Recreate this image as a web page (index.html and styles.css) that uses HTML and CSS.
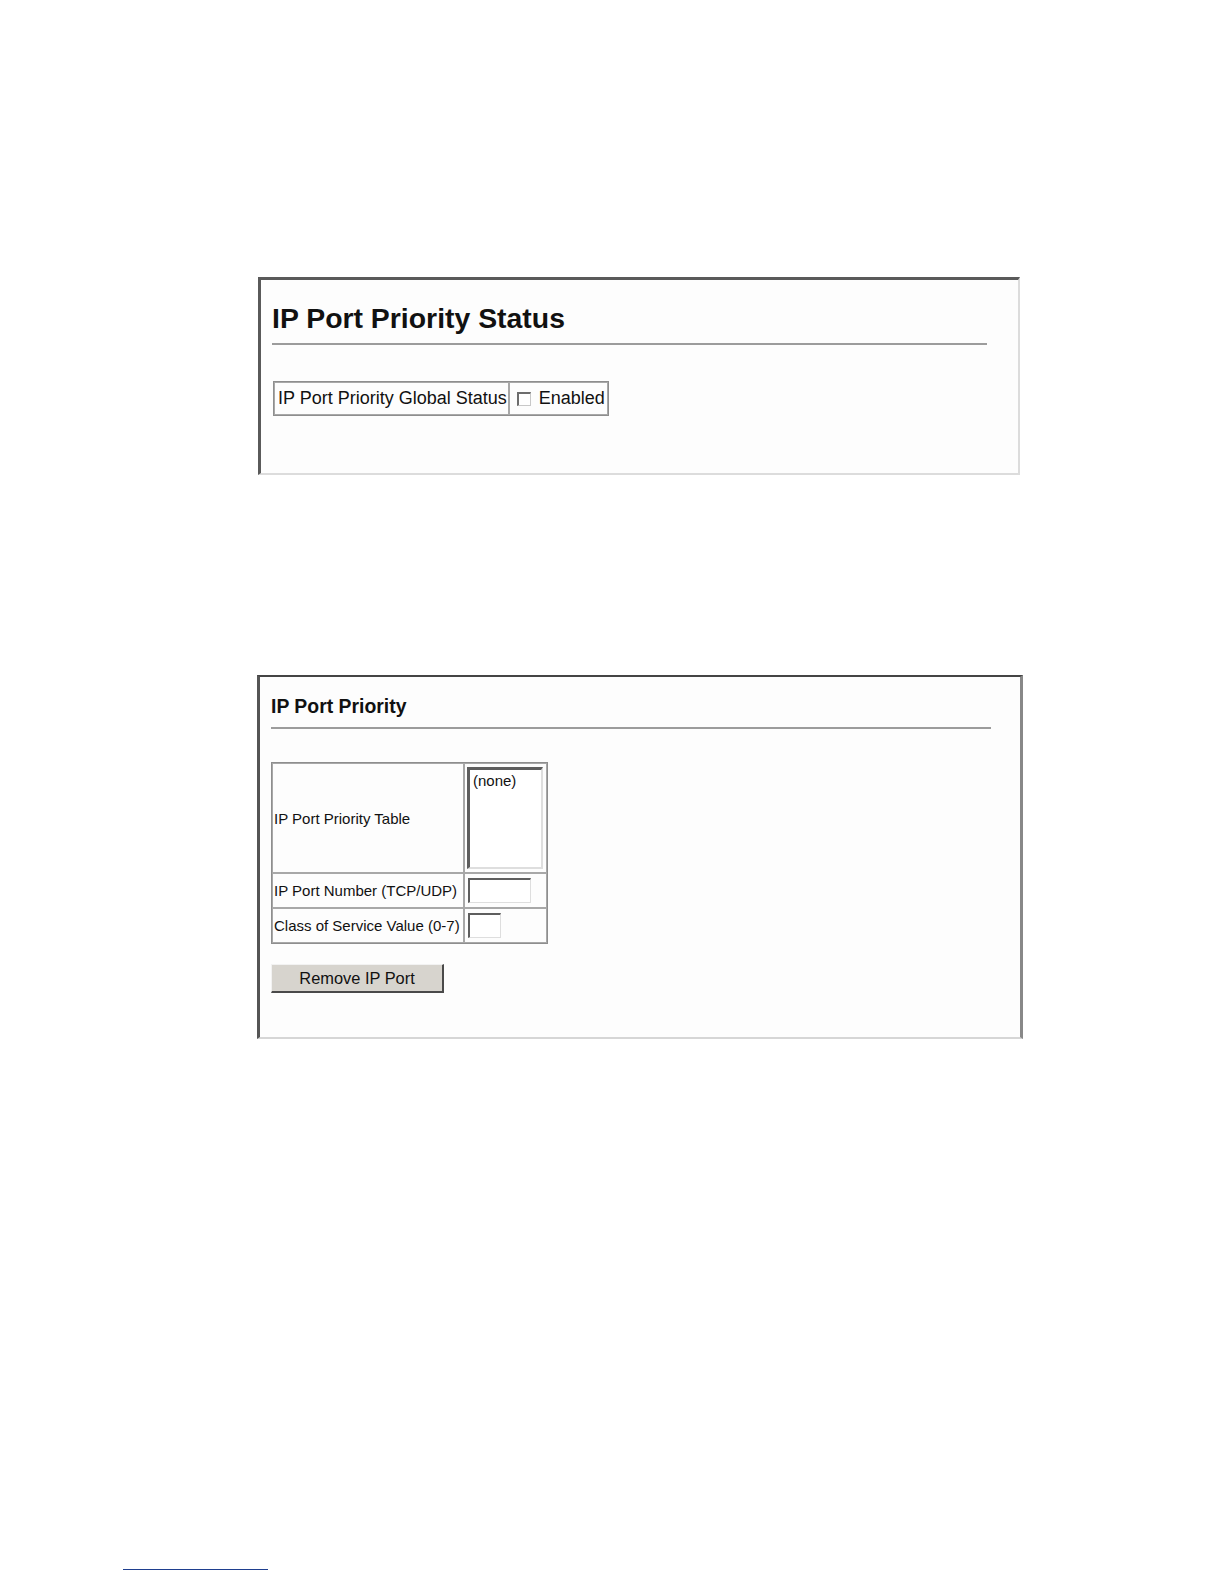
FILE: index.html
```html
<!DOCTYPE html>
<html>
<head>
<meta charset="utf-8">
<title>IP Port Priority</title>
<link rel="stylesheet" href="styles.css">
</head>
<body>
<div class="page">
  <section class="panel panel-status">
    <h1 class="title-large">IP Port Priority Status</h1>
    <div class="rule rule-status"></div>
    <table class="grid grid-status">
      <tr>
        <td class="cell"><div class="box-status-label">IP Port Priority Global Status</div></td>
        <td class="cell"><div class="box-status-value"><span class="check"></span>Enabled</div></td>
      </tr>
    </table>
  </section>

  <section class="panel panel-port">
    <h2 class="title-small">IP Port Priority</h2>
    <div class="rule rule-port"></div>
    <table class="grid grid-port">
      <tr>
        <td class="cell"><div class="box-label box-tall">IP Port Priority Table</div></td>
        <td class="cell"><div class="box-field box-tall"><div class="listbox">(none)</div></div></td>
      </tr>
      <tr>
        <td class="cell"><div class="box-label box-row">IP Port Number (TCP/UDP)</div></td>
        <td class="cell"><div class="box-field box-row"><div class="textbox textbox-wide"></div></div></td>
      </tr>
      <tr>
        <td class="cell"><div class="box-label box-row">Class of Service Value (0-7)</div></td>
        <td class="cell"><div class="box-field box-row"><div class="textbox textbox-narrow"></div></div></td>
      </tr>
    </table>
    <div class="button">Remove IP Port</div>
  </section>

  <div class="footnote-rule"></div>
</div>
</body>
</html>
```
FILE: styles.css
```css
html, body {
  margin: 0;
  padding: 0;
  background: #ffffff;
}

body {
  font-family: "Liberation Sans", Arial, sans-serif;
  color: #111111;
}

.page {
  padding-top: 277px;
  display: flex;
  flex-direction: column;
  align-items: flex-start;
}

.panel {
  box-sizing: border-box;
  background: #fdfdfd;
}

.panel-status {
  margin-left: 258px;
  width: 762px;
  height: 198px;
  border-top: 3px solid #5a5a5a;
  border-left: 3px solid #5a5a5a;
  border-right: 2px solid #dcdcdc;
  border-bottom: 2px solid #dcdcdc;
  padding: 22px 0 0 11px;
}

.panel-port {
  margin-left: 257px;
  margin-top: 200px;
  width: 766px;
  height: 364px;
  border-top: 2px solid #444444;
  border-left: 3px solid #555555;
  border-right: 3px solid #888888;
  border-bottom: 2px solid #d6d6d6;
  padding: 17px 0 0 11px;
}

.title-large {
  margin: 0;
  font-size: 28.4px;
  line-height: 33px;
  font-weight: bold;
  color: #111111;
}

.title-small {
  margin: 0;
  font-size: 19.4px;
  line-height: 24px;
  font-weight: bold;
  color: #111111;
}

.rule {
  height: 0;
  border-top: 2px solid #9c9c9c;
}

.rule-status {
  width: 715px;
  margin-top: 8px;
}

.rule-port {
  width: 720px;
  margin-top: 9px;
}

.grid {
  border-collapse: separate;
  border-spacing: 0;
  border: 1px solid #8e8e8e;
}

.grid-status {
  margin-top: 36px;
  margin-left: 1px;
}

.grid-port {
  margin-top: 33px;
}

.cell {
  border: 1px solid #a8a8a8;
  padding: 0;
  white-space: nowrap;
  vertical-align: top;
}

.box-status-label {
  box-sizing: border-box;
  height: 31px;
  line-height: 31px;
  font-size: 18px;
  padding: 0 1px 0 3px;
}

.box-status-value {
  box-sizing: border-box;
  height: 31px;
  line-height: 31px;
  font-size: 18px;
  padding: 0 2px 0 7px;
  display: flex;
  align-items: center;
}

.check {
  display: inline-block;
  width: 14px;
  height: 14px;
  box-sizing: border-box;
  border-top: 2px solid #6d6d6d;
  border-left: 2px solid #6d6d6d;
  border-right: 1px solid #c8c8c8;
  border-bottom: 1px solid #c8c8c8;
  background: #ffffff;
  margin-right: 8px;
  margin-top: 1px;
}

.box-label {
  box-sizing: border-box;
  width: 190px;
  padding-left: 1px;
  font-size: 15px;
  display: flex;
  align-items: center;
}

.box-field {
  box-sizing: border-box;
  width: 81px;
  padding-left: 2px;
  display: flex;
  align-items: center;
}

.box-tall {
  height: 108px;
}

.box-tall.box-field {
  align-items: flex-start;
  padding-top: 3px;
}

.box-row {
  height: 33px;
}

.listbox {
  box-sizing: border-box;
  width: 76px;
  height: 102px;
  border-top: 3px solid #5e5e5e;
  border-left: 3px solid #5e5e5e;
  border-right: 2px solid #dedede;
  border-bottom: 2px solid #dedede;
  padding: 2px 0 0 3px;
  font-size: 15px;
  line-height: 17px;
  background: #ffffff;
}

.textbox {
  box-sizing: border-box;
  height: 25px;
  border-top: 2px solid #5e5e5e;
  border-left: 2px solid #5e5e5e;
  border-right: 1px solid #dedede;
  border-bottom: 1px solid #dedede;
  background: #ffffff;
  margin-left: 1px;
}

.textbox-wide {
  width: 63px;
}

.textbox-narrow {
  width: 33px;
}

.button {
  box-sizing: border-box;
  margin-top: 20px;
  width: 173px;
  height: 29px;
  background: #d7d4ce;
  border-top: 1px solid #f2f2f2;
  border-left: 1px solid #f2f2f2;
  border-right: 2px solid #4a4a4a;
  border-bottom: 2px solid #4a4a4a;
  font-size: 16.4px;
  line-height: 26px;
  text-align: center;
  color: #111111;
}

.footnote-rule {
  margin-top: 530px;
  margin-left: 123px;
  width: 145px;
  height: 1px;
  background: #1f3f8f;
}
```
